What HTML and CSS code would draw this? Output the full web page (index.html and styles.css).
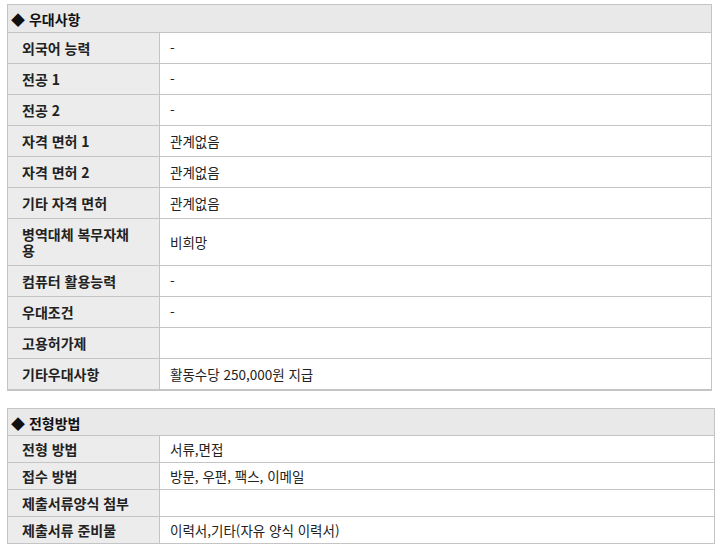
FILE: index.html
```html
<!DOCTYPE html>
<html lang="ko">
<head>
<meta charset="utf-8">
<link rel="stylesheet" href="styles.css">
</head>
<body>
<table class="info info-first">
  <colgroup><col class="col-label"><col></colgroup>
  <tr><th colspan="2" class="head">◆ 우대사항</th></tr>
  <tr><td class="label">외국어 능력</td><td class="value">-</td></tr>
  <tr><td class="label">전공 1</td><td class="value">-</td></tr>
  <tr><td class="label">전공 2</td><td class="value">-</td></tr>
  <tr><td class="label">자격 면허 1</td><td class="value">관계없음</td></tr>
  <tr><td class="label">자격 면허 2</td><td class="value">관계없음</td></tr>
  <tr><td class="label">기타 자격 면허</td><td class="value">관계없음</td></tr>
  <tr><td class="label">병역대체 복무자채용</td><td class="value">비희망</td></tr>
  <tr><td class="label">컴퓨터 활용능력</td><td class="value">-</td></tr>
  <tr><td class="label">우대조건</td><td class="value">-</td></tr>
  <tr><td class="label">고용허가제</td><td class="value"></td></tr>
  <tr><td class="label">기타우대사항</td><td class="value">활동수당 250,000원 지급</td></tr>
</table>
<table class="info info-second">
  <colgroup><col class="col-label"><col></colgroup>
  <tr><th colspan="2" class="head">◆ 전형방법</th></tr>
  <tr><td class="label">전형 방법</td><td class="value">서류,면접</td></tr>
  <tr><td class="label">접수 방법</td><td class="value">방문, 우편, 팩스, 이메일</td></tr>
  <tr><td class="label">제출서류양식 첨부</td><td class="value"></td></tr>
  <tr><td class="label">제출서류 준비물</td><td class="value">이력서,기타(자유 양식 이력서)</td></tr>
</table>
</body>
</html>
```
FILE: styles.css
```css
body {
  margin: 0;
  padding: 4px 0 0 7px;
  background: #fff;
  font-family: "Noto Sans CJK KR", "Noto Sans", sans-serif;
  font-size: 14px;
  color: #222;
}
.info {
  border-collapse: collapse;
  table-layout: fixed;
}
.col-label {
  width: 152px;
}
.info td, .info th {
  border: 1px solid #c4c4c4;
  line-height: 16px;
  vertical-align: middle;
}
.info-first {
  width: 705px;
  border-bottom: 2px solid #c4c4c4;
}
.info-second {
  width: 708px;
  margin-top: 17px;
}
.head {
  background: #e9e9e9;
  text-align: left;
  font-weight: bold;
  color: #111;
  padding: 6px 4px 5px 3px;
}
.info-second .head {
  padding: 6px 4px 4px 3px;
}
.label {
  background: #ececec;
  font-weight: bold;
  color: #222;
  padding: 7px 21px 7px 14px;
}
.value {
  background: #fff;
  padding: 7px 10px 7px 10px;
  color: #222;
  font-size: 13.5px;
}
.info-second .label, .info-second .value {
  padding-top: 5px;
  padding-bottom: 5px;
}
```
